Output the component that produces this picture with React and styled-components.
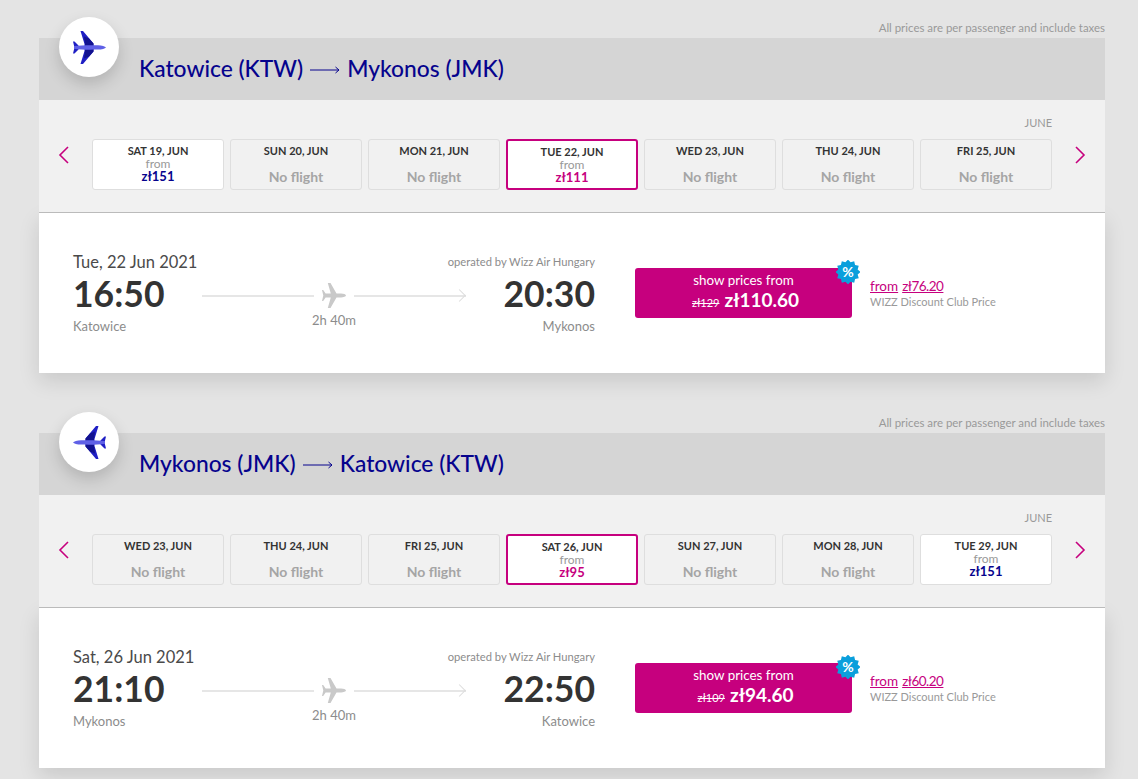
import React from "react";
import styled, { createGlobalStyle } from "styled-components";

const MAGENTA = "#c6007e";
const NAVY = "#06038d";

const GlobalStyle = createGlobalStyle`
  html, body {
    margin: 0;
    padding: 0;
    background: #e4e4e4;
    font-family: "Lato", "Noto Sans", sans-serif;
    color: #333333;
  }
`;

const Page = styled.div`
  padding: 18px 33px 11px 39px;
  display: flex;
  flex-direction: column;
  gap: 40px;
`;

const Section = styled.section`
  position: relative;
  display: flex;
  flex-direction: column;
`;

const PriceNote = styled.div`
  height: 20px;
  line-height: 20px;
  text-align: right;
  font-size: 11.45px;
  color: #999999;
`;

const RouteHeader = styled.div`
  height: 62px;
  box-sizing: border-box;
  background: #d5d5d5;
  padding: 0 0 2px 100px;
  display: flex;
  align-items: center;
  gap: 7px;
`;

const RouteName = styled.h2`
  margin: 0;
  font-size: 22.8px;
  line-height: 30px;
  font-weight: 500;
  color: ${NAVY};
`;

const PlaneBadge = styled.div`
  position: absolute;
  left: 20px;
  top: -1px;
  width: 60px;
  height: 60px;
  border-radius: 50%;
  background: #ffffff;
  box-shadow: 0 7px 16px rgba(0, 0, 0, 0.16);
  display: flex;
  align-items: center;
  justify-content: center;
`;

const DateStrip = styled.div`
  height: 113px;
  box-sizing: border-box;
  background: #f1f1f1;
  border-bottom: 1px solid #bbbbbb;
  padding: 17px 53px 0 53px;
  display: flex;
  flex-direction: column;
  position: relative;
`;

const MonthLabel = styled.div`
  height: 22px;
  line-height: 12px;
  text-align: right;
  font-size: 11px;
  color: #999999;
`;

const DateRow = styled.div`
  display: flex;
  gap: 6px;
`;

const ArrowButton = styled.div`
  position: absolute;
  top: 46px;
  ${({ $side }) => ($side === "left" ? "left: 19px;" : "right: 19px;")}
  width: 12px;
  height: 18px;
  display: flex;
`;

const DateCard = styled.div`
  width: 132px;
  height: 51px;
  box-sizing: border-box;
  border-radius: 3px;
  text-align: center;
  padding-top: 4px;
  background: ${({ $kind }) => ($kind === "none" ? "#f1f1f1" : "#ffffff")};
  border: ${({ $kind }) =>
    $kind === "active" ? `2px solid ${MAGENTA}` : "1px solid #dedede"};
`;

const DateTitle = styled.div`
  font-size: 11px;
  line-height: 13px;
  font-weight: 700;
  color: #333333;
`;

const FromText = styled.div`
  font-size: 12px;
  line-height: 13px;
  color: #999999;
`;

const CardPrice = styled.div`
  font-size: 13px;
  line-height: 13px;
  font-weight: 700;
  color: ${({ $active }) => ($active ? MAGENTA : NAVY)};
`;

const NoFlight = styled.div`
  margin-top: 12px;
  font-size: 14px;
  line-height: 16px;
  font-weight: 700;
  color: #a5a5a5;
`;

const Detail = styled.div`
  height: 160px;
  box-sizing: border-box;
  background: #ffffff;
  box-shadow: 0 8px 20px rgba(0, 0, 0, 0.12);
  padding: 39px 0 0 34px;
  display: flex;
  align-items: flex-start;
`;

const Schedule = styled.div`
  width: 522px;
`;

const ScheduleTop = styled.div`
  display: flex;
  justify-content: space-between;
  align-items: flex-start;
  height: 20px;
`;

const FlightDate = styled.div`
  font-size: 16.5px;
  line-height: 20px;
  color: #4a4a4a;
`;

const Operator = styled.div`
  font-size: 11.2px;
  line-height: 20px;
  color: #8c8c8c;
`;

const ScheduleMain = styled.div`
  display: grid;
  grid-template-columns: 129px 264px 129px;
  margin-top: 1px;
`;

const TimeCell = styled.div`
  text-align: ${({ $right }) => ($right ? "right" : "left")};
`;

const Time = styled.div`
  font-size: 35.5px;
  line-height: 42px;
  font-weight: 700;
  color: #333333;
`;

const City = styled.div`
  margin-top: 2px;
  font-size: 13px;
  line-height: 18px;
  color: #8c8c8c;
`;

const RouteCell = styled.div`
  display: flex;
  flex-direction: column;
  align-items: center;
`;

const RouteLine = styled.div`
  width: 100%;
  height: 25px;
  margin-top: 10px;
  display: flex;
  align-items: center;
  gap: 8px;
`;

const LineSegment = styled.div`
  position: relative;
  flex: 1;
  height: 2px;
  background: #e6e6e6;

  ${({ $arrow }) =>
    $arrow &&
    `&::after {
      content: "";
      position: absolute;
      right: 2px;
      top: -4px;
      width: 8px;
      height: 8px;
      border-top: 1px solid #dcdcdc;
      border-right: 1px solid #dcdcdc;
      transform: rotate(45deg);
    }`}
`;

const Duration = styled.div`
  margin-top: 3px;
  font-size: 13px;
  line-height: 18px;
  color: #8c8c8c;
`;

const PriceButton = styled.div`
  position: relative;
  width: 217px;
  height: 50px;
  margin: 16px 0 0 40px;
  box-sizing: border-box;
  padding-top: 3px;
  border-radius: 3px;
  background: ${MAGENTA};
  color: #ffffff;
  text-align: center;
`;

const ButtonLabel = styled.div`
  font-size: 13.4px;
  line-height: 18px;
`;

const ButtonPrice = styled.div`
  display: flex;
  justify-content: center;
  align-items: baseline;
  gap: 5px;
  padding-left: 4px;
  line-height: 22px;
`;

const OldPrice = styled.span`
  font-size: 11px;
  text-decoration: line-through;
`;

const NewPrice = styled.span`
  font-size: 19px;
  font-weight: 700;
`;

const Discount = styled.div`
  position: absolute;
  right: -8px;
  top: -8px;
  width: 24px;
  height: 24px;
  display: flex;
  align-items: center;
  justify-content: center;
`;

const DiscountMark = styled.span`
  position: absolute;
  inset: 0;
  text-align: center;
  font-size: 14px;
  line-height: 24px;
  font-weight: 700;
  color: #ffffff;
`;

const ClubPrice = styled.div`
  margin: 26px 0 0 18px;
`;

const ClubLinks = styled.div`
  display: flex;
  gap: 4px;
`;

const ClubLink = styled.a`
  font-size: 13.5px;
  line-height: 16px;
  color: ${MAGENTA};
  text-decoration: underline;
  letter-spacing: ${({ $tight }) => ($tight ? "-0.5px" : "0")};
`;

const ClubNote = styled.div`
  font-size: 11px;
  line-height: 15px;
  color: #999999;
`;

const RouteArrow = () => (
  <svg width="30" height="12" viewBox="0 0 30 12" style={{ marginTop: 4 }}>
    <path d="M0 6H29M25.5 3L29 6L25.5 9" fill="none" stroke={NAVY} strokeWidth="1" />
  </svg>
);

const Chevron = ({ left }) => (
  <svg width="12" height="18" viewBox="0 0 12 18">
    <path
      d={left ? "M10 1L2 9L10 17" : "M2 1L10 9L2 17"}
      fill="none"
      stroke={MAGENTA}
      strokeWidth="1.6"
    />
  </svg>
);

const BluePlane = ({ flip }) => (
  <svg
    width="33"
    height="33"
    viewBox="0 0 33 33"
    style={flip ? { transform: "scaleX(-1)" } : undefined}
  >
    <path d="M7.5 0H10L20.5 12.5V20.5L10 33H7.5L11.5 20V13Z" fill="#1f1fc4" />
    <path d="M11 5.5L16 7.5L20.5 12.5V20.5L16 25.5L11 27.5L12 20V13Z" fill="#12128f" />
    <path d="M0 10.5H1.5L5.5 14.5H5.5V18.5L1.5 22.5H0L1.5 16.5Z" fill="#1f1fc4" />
    <path d="M1 15C8 14.2 14 14 25 14.2C29 14.4 32 15.4 33 16.4C32 17.4 29 18.5 25 18.6C14 19 8 18.6 1 17.8Z" fill="#5f60e6" />
  </svg>
);

const GreyPlane = () => (
  <svg width="24" height="25" viewBox="0 0 24 25" style={{ flexShrink: 0 }}>
    <path
      d="M24 12.5C24 11.4 21.5 10.6 19 10.6H14.5L8.5 0H5.8L8.8 10.6H3.6L1.2 7H0L1.3 12.5L0 18H1.2L3.6 14.4H8.8L5.8 25H8.5L14.5 14.4H19C21.5 14.4 24 13.6 24 12.5Z"
      fill="#c9c9c9"
    />
  </svg>
);

// scalloped badge outline, 12 bumps around the centre
const starPoints = Array.from({ length: 24 }, (_, i) => {
  const r = i % 2 === 0 ? 12.4 : 10;
  const a = (i * Math.PI) / 12;
  return `${(12 + r * Math.sin(a)).toFixed(2)},${(12 - r * Math.cos(a)).toFixed(2)}`;
}).join(" ");

const flights = [
  {
    route: ["Katowice (KTW)", "Mykonos (JMK)"],
    flip: false,
    days: [
      { title: "SAT 19, JUN", price: "zł151" },
      { title: "SUN 20, JUN" },
      { title: "MON 21, JUN" },
      { title: "TUE 22, JUN", price: "zł111", active: true },
      { title: "WED 23, JUN" },
      { title: "THU 24, JUN" },
      { title: "FRI 25, JUN" },
    ],
    date: "Tue, 22 Jun 2021",
    depart: "16:50",
    arrive: "20:30",
    from: "Katowice",
    to: "Mykonos",
    oldPrice: "zł129",
    newPrice: "zł110.60",
    club: "zł76.20",
  },
  {
    route: ["Mykonos (JMK)", "Katowice (KTW)"],
    flip: true,
    days: [
      { title: "WED 23, JUN" },
      { title: "THU 24, JUN" },
      { title: "FRI 25, JUN" },
      { title: "SAT 26, JUN", price: "zł95", active: true },
      { title: "SUN 27, JUN" },
      { title: "MON 28, JUN" },
      { title: "TUE 29, JUN", price: "zł151" },
    ],
    date: "Sat, 26 Jun 2021",
    depart: "21:10",
    arrive: "22:50",
    from: "Mykonos",
    to: "Katowice",
    oldPrice: "zł109",
    newPrice: "zł94.60",
    club: "zł60.20",
  },
];

const DayCard = ({ day }) => {
  const kind = day.active ? "active" : day.price ? "open" : "none";
  return (
    <DateCard $kind={kind}>
      <DateTitle>{day.title}</DateTitle>
      {day.price ? (
        <>
          <FromText>from</FromText>
          <CardPrice $active={day.active}>{day.price}</CardPrice>
        </>
      ) : (
        <NoFlight>No flight</NoFlight>
      )}
    </DateCard>
  );
};

const FlightSection = ({ flight }) => (
  <Section>
    <PriceNote>All prices are per passenger and include taxes</PriceNote>
    <RouteHeader>
      <RouteName>{flight.route[0]}</RouteName>
      <RouteArrow />
      <RouteName>{flight.route[1]}</RouteName>
    </RouteHeader>
    <PlaneBadge>
      <BluePlane flip={flight.flip} />
    </PlaneBadge>
    <DateStrip>
      <MonthLabel>JUNE</MonthLabel>
      <ArrowButton $side="left">
        <Chevron left />
      </ArrowButton>
      <DateRow>
        {flight.days.map((day) => (
          <DayCard key={day.title} day={day} />
        ))}
      </DateRow>
      <ArrowButton $side="right">
        <Chevron />
      </ArrowButton>
    </DateStrip>
    <Detail>
      <Schedule>
        <ScheduleTop>
          <FlightDate>{flight.date}</FlightDate>
          <Operator>operated by Wizz Air Hungary</Operator>
        </ScheduleTop>
        <ScheduleMain>
          <TimeCell>
            <Time>{flight.depart}</Time>
            <City>{flight.from}</City>
          </TimeCell>
          <RouteCell>
            <RouteLine>
              <LineSegment />
              <GreyPlane />
              <LineSegment $arrow />
            </RouteLine>
            <Duration>2h 40m</Duration>
          </RouteCell>
          <TimeCell $right>
            <Time>{flight.arrive}</Time>
            <City>{flight.to}</City>
          </TimeCell>
        </ScheduleMain>
      </Schedule>
      <PriceButton>
        <ButtonLabel>show prices from</ButtonLabel>
        <ButtonPrice>
          <OldPrice>{flight.oldPrice}</OldPrice>
          <NewPrice>{flight.newPrice}</NewPrice>
        </ButtonPrice>
        <Discount>
          <svg width="24" height="24" viewBox="0 0 24 24">
            <polygon points={starPoints} fill="#0a9fdc" />
          </svg>
          <DiscountMark>%</DiscountMark>
        </Discount>
      </PriceButton>
      <ClubPrice>
        <ClubLinks>
          <ClubLink>from</ClubLink>
          <ClubLink $tight>{flight.club}</ClubLink>
        </ClubLinks>
        <ClubNote>WIZZ Discount Club Price</ClubNote>
      </ClubPrice>
    </Detail>
  </Section>
);

export default function App() {
  return (
    <>
      <GlobalStyle />
      <Page>
        {flights.map((flight) => (
          <FlightSection key={flight.date} flight={flight} />
        ))}
      </Page>
    </>
  );
}
